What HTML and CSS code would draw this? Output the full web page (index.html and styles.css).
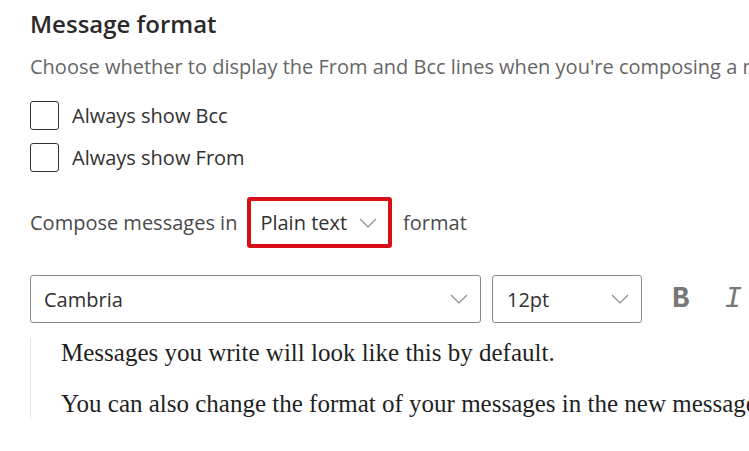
FILE: index.html
```html
<!DOCTYPE html>
<html lang="en">
  <head>
    <meta charset="UTF-8" />
    <title>Message format</title>
    <link rel="stylesheet" href="styles.css">
  </head>
  <body>
    <div class="settings">
      <h2 class="section-title">Message format</h2>
      <p class="section-desc">
        Choose whether to display the From and Bcc lines when you're composing a message.
      </p>

      <label class="check-row">
        <span class="check-box"></span>
        <span class="check-label">Always show Bcc</span>
      </label>
      <label class="check-row">
        <span class="check-box"></span>
        <span class="check-label">Always show From</span>
      </label>

      <div class="compose-row">
        <span>Compose messages in</span>
        <div class="format-select highlight">
          <span>Plain text</span>
          <svg class="chevron" width="18" height="10" viewBox="0 0 18 10">
            <path d="M1 1l8 8 8-8" fill="none" stroke="#8a8a8a" stroke-width="1.2" />
          </svg>
        </div>
        <span>format</span>
      </div>

      <div class="font-row">
        <div class="dropdown font-name">
          <span>Cambria</span>
          <svg class="chevron" width="18" height="10" viewBox="0 0 18 10">
            <path d="M1 1l8 8 8-8" fill="none" stroke="#8a8a8a" stroke-width="1.2" />
          </svg>
        </div>
        <div class="dropdown font-size">
          <span>12pt</span>
          <svg class="chevron" width="18" height="10" viewBox="0 0 18 10">
            <path d="M1 1l8 8 8-8" fill="none" stroke="#8a8a8a" stroke-width="1.2" />
          </svg>
        </div>
        <button class="tool-btn bold">B</button>
        <button class="tool-btn italic">I</button>
      </div>

      <div class="preview">
        <p>Messages you write will look like this by default.</p>
        <p>You can also change the format of your messages in the new message window.</p>
      </div>
    </div>
  </body>
</html>
```

FILE: styles.css
```css
body {
  margin: 0;
  background-color: #fff;
  font-family: "Open Sans", "Noto Sans", sans-serif;
  color: #323130;
  overflow: hidden;
}

.settings {
  padding: 0 0 0 30px;
  white-space: nowrap;
  overflow: hidden;
}

.section-title {
  margin: 0;
  padding-top: 8px;
  font-size: 24px;
  font-weight: 600;
  line-height: 32px;
  color: #2b2a29;
}

.section-desc {
  margin: 15px 0 0;
  font-size: 20px;
  line-height: 24px;
  color: #666;
}

.check-row {
  display: flex;
  align-items: center;
  gap: 13px;
  margin-top: 22px;
  font-size: 20px;
  color: #323130;
}

.check-row + .check-row {
  margin-top: 13px;
}

.check-box {
  width: 27px;
  height: 27px;
  border: 1px solid #323130;
  border-radius: 3px;
}

.compose-row {
  display: flex;
  align-items: center;
  margin-top: 25px;
  font-size: 20px;
  color: #4a4a4a;
}

.format-select {
  display: flex;
  align-items: center;
  gap: 12px;
  margin: 0 11px 0 10px;
  padding: 0 11px 0 9px;
  height: 43px;
  color: #323130;
}

.format-select.highlight {
  border: 4px solid #d80f17;
  border-radius: 3px;
}

.font-row {
  display: flex;
  align-items: center;
  margin-top: 27px;
}

.dropdown {
  display: flex;
  align-items: center;
  justify-content: space-between;
  box-sizing: border-box;
  height: 48px;
  padding: 0 12px 0 13px;
  border: 1px solid #8a8886;
  border-radius: 3px;
  font-size: 20px;
  color: #323130;
}

.font-name {
  width: 451px;
}

.font-size {
  width: 150px;
  margin-left: 11px;
  padding-left: 14px;
}

.tool-btn {
  border: none;
  background: none;
  padding: 0;
  font-family: "Liberation Mono", monospace;
  font-size: 29px;
  color: #777;
  cursor: pointer;
}

.tool-btn.bold {
  margin-left: 30px;
  font-weight: 700;
}

.tool-btn.italic {
  margin-left: 35px;
  font-style: italic;
}

.preview {
  margin-top: 15px;
  padding-left: 30px;
  border-left: 1px solid #e6e6e6;
  font-family: "Liberation Serif", serif;
  font-size: 25px;
  color: #1f1f1f;
}

.preview p {
  margin: 0;
  line-height: 30px;
}

.preview p + p {
  margin-top: 21px;
}
```
